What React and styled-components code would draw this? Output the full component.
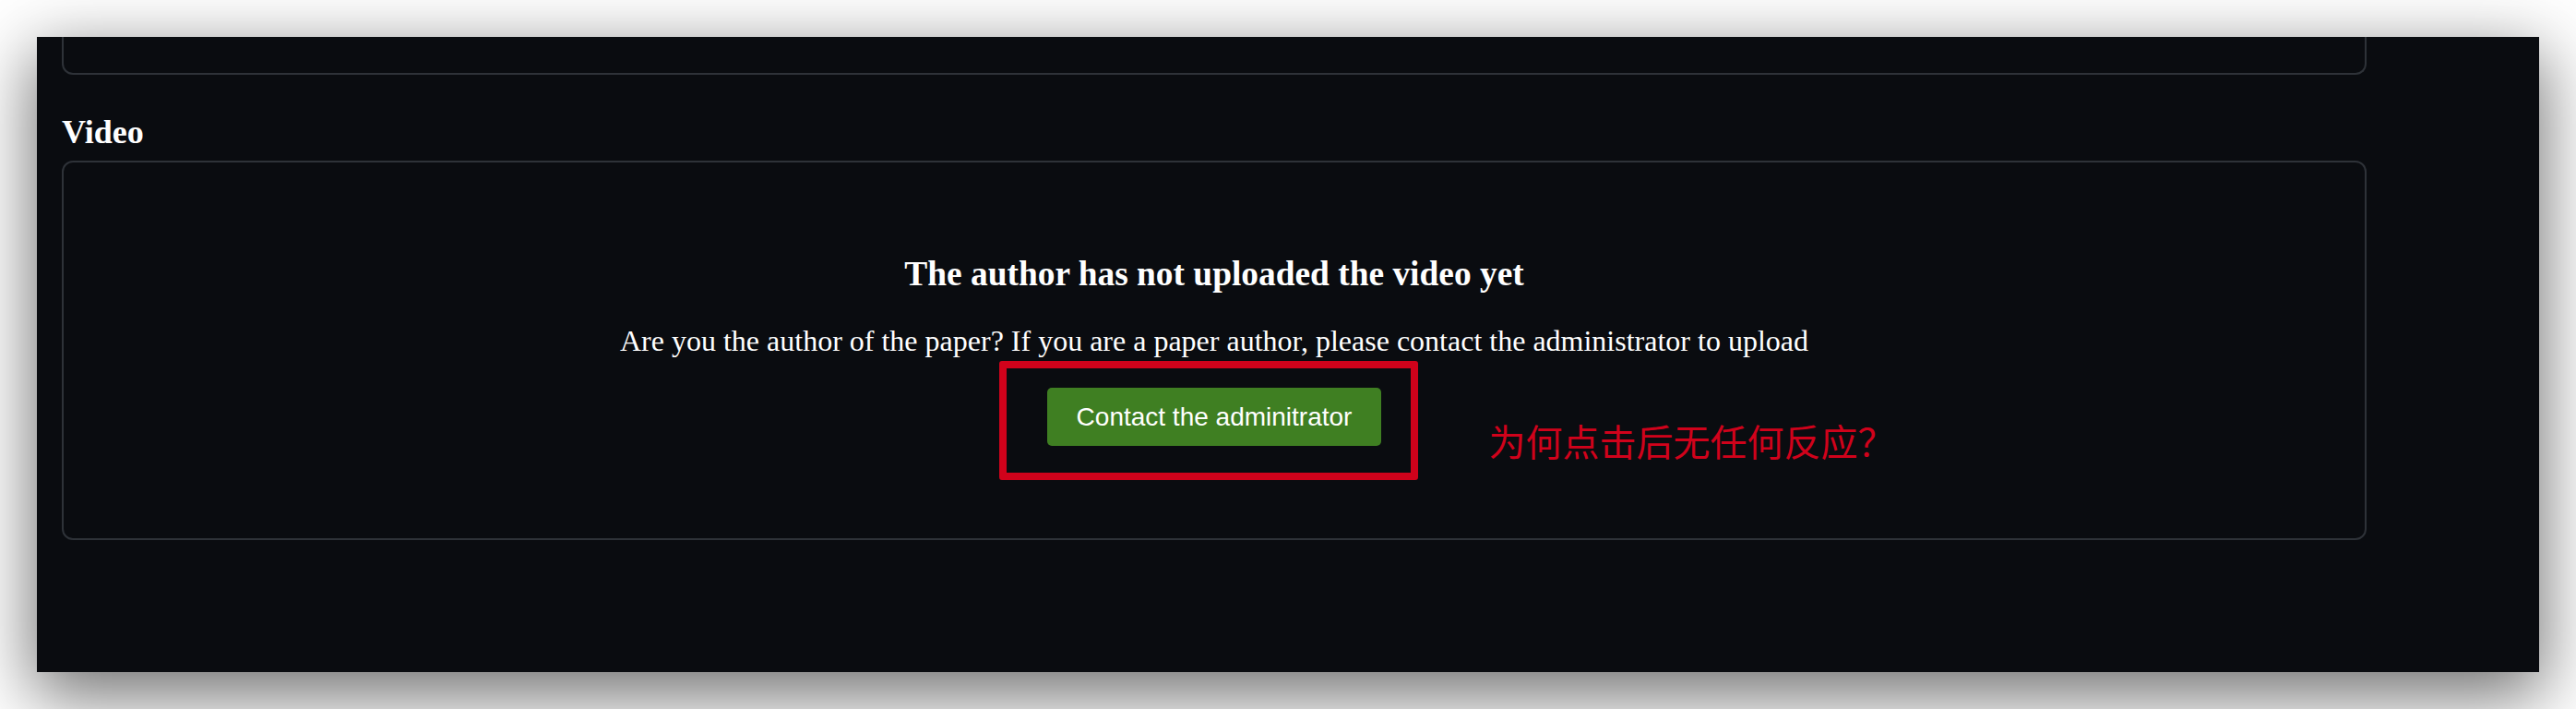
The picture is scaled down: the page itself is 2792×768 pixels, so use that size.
import styled, { createGlobalStyle } from "styled-components";

const GlobalStyle = createGlobalStyle`
  html, body {
    margin: 0;
    padding: 0;
    background: #ffffff;
  }
  body {
    font-family: 'Liberation Serif', 'Times New Roman', serif;
  }
`;

const Page = styled.div`
  padding: 40px;
  width: 2792px;
  box-sizing: border-box;
`;

const Window = styled.div`
  height: 688px;
  background: #0a0c10;
  box-shadow: 0 22px 70px 4px rgba(0, 0, 0, 0.56);
  padding: 0 187px 0 27px;
  box-sizing: border-box;
  overflow: hidden;
  color: #ffffff;
`;

const PrevCard = styled.div`
  height: 41px;
  box-sizing: border-box;
  border: 2px solid #2e3238;
  border-top: none;
  border-radius: 0 0 12px 12px;
`;

const SectionTitle = styled.h2`
  margin: 42px 0 11px;
  font-size: 36px;
  line-height: 40px;
  font-weight: bold;
`;

const Card = styled.div`
  border: 2px solid #2e3238;
  border-radius: 12px;
  padding: 99px 20px 100px;
  display: flex;
  flex-direction: column;
  align-items: center;
`;

const EmptyTitle = styled.h3`
  margin: 0;
  font-size: 37.4px;
  line-height: 44px;
  font-weight: bold;
`;

const EmptyText = styled.p`
  margin: 30px 0 31px;
  font-size: 32px;
  line-height: 40px;
`;

const ButtonWrap = styled.div`
  position: relative;
`;

const Button = styled.button`
  height: 63px;
  padding: 0 32px;
  border: none;
  border-radius: 5px;
  background: #3f7f22;
  color: #ffffff;
  font-family: 'Liberation Sans', Arial, sans-serif;
  font-size: 28px;
  cursor: pointer;
`;

const Highlight = styled.div`
  position: absolute;
  left: -52px;
  top: -29px;
  right: -40px;
  bottom: -37px;
  border: 8px solid #d0021b;
  border-radius: 3px;
  pointer-events: none;
`;

const Note = styled.span`
  position: absolute;
  left: calc(100% + 116px);
  top: 37px;
  white-space: nowrap;
  color: #d0021b;
  font-family: 'Noto Sans CJK SC', sans-serif;
  font-size: 40px;
  line-height: 40px;
`;

export default function App() {
  return (
    <Page>
      <GlobalStyle />
      <Window>
        <PrevCard />
        <SectionTitle>Video</SectionTitle>
        <Card>
          <EmptyTitle>The author has not uploaded the video yet</EmptyTitle>
          <EmptyText>
            Are you the author of the paper? If you are a paper author, please contact the administrator to upload
          </EmptyText>
          <ButtonWrap>
            <Button>Contact the adminitrator</Button>
            <Highlight />
            <Note>为何点击后无任何反应？</Note>
          </ButtonWrap>
        </Card>
      </Window>
    </Page>
  );
}
